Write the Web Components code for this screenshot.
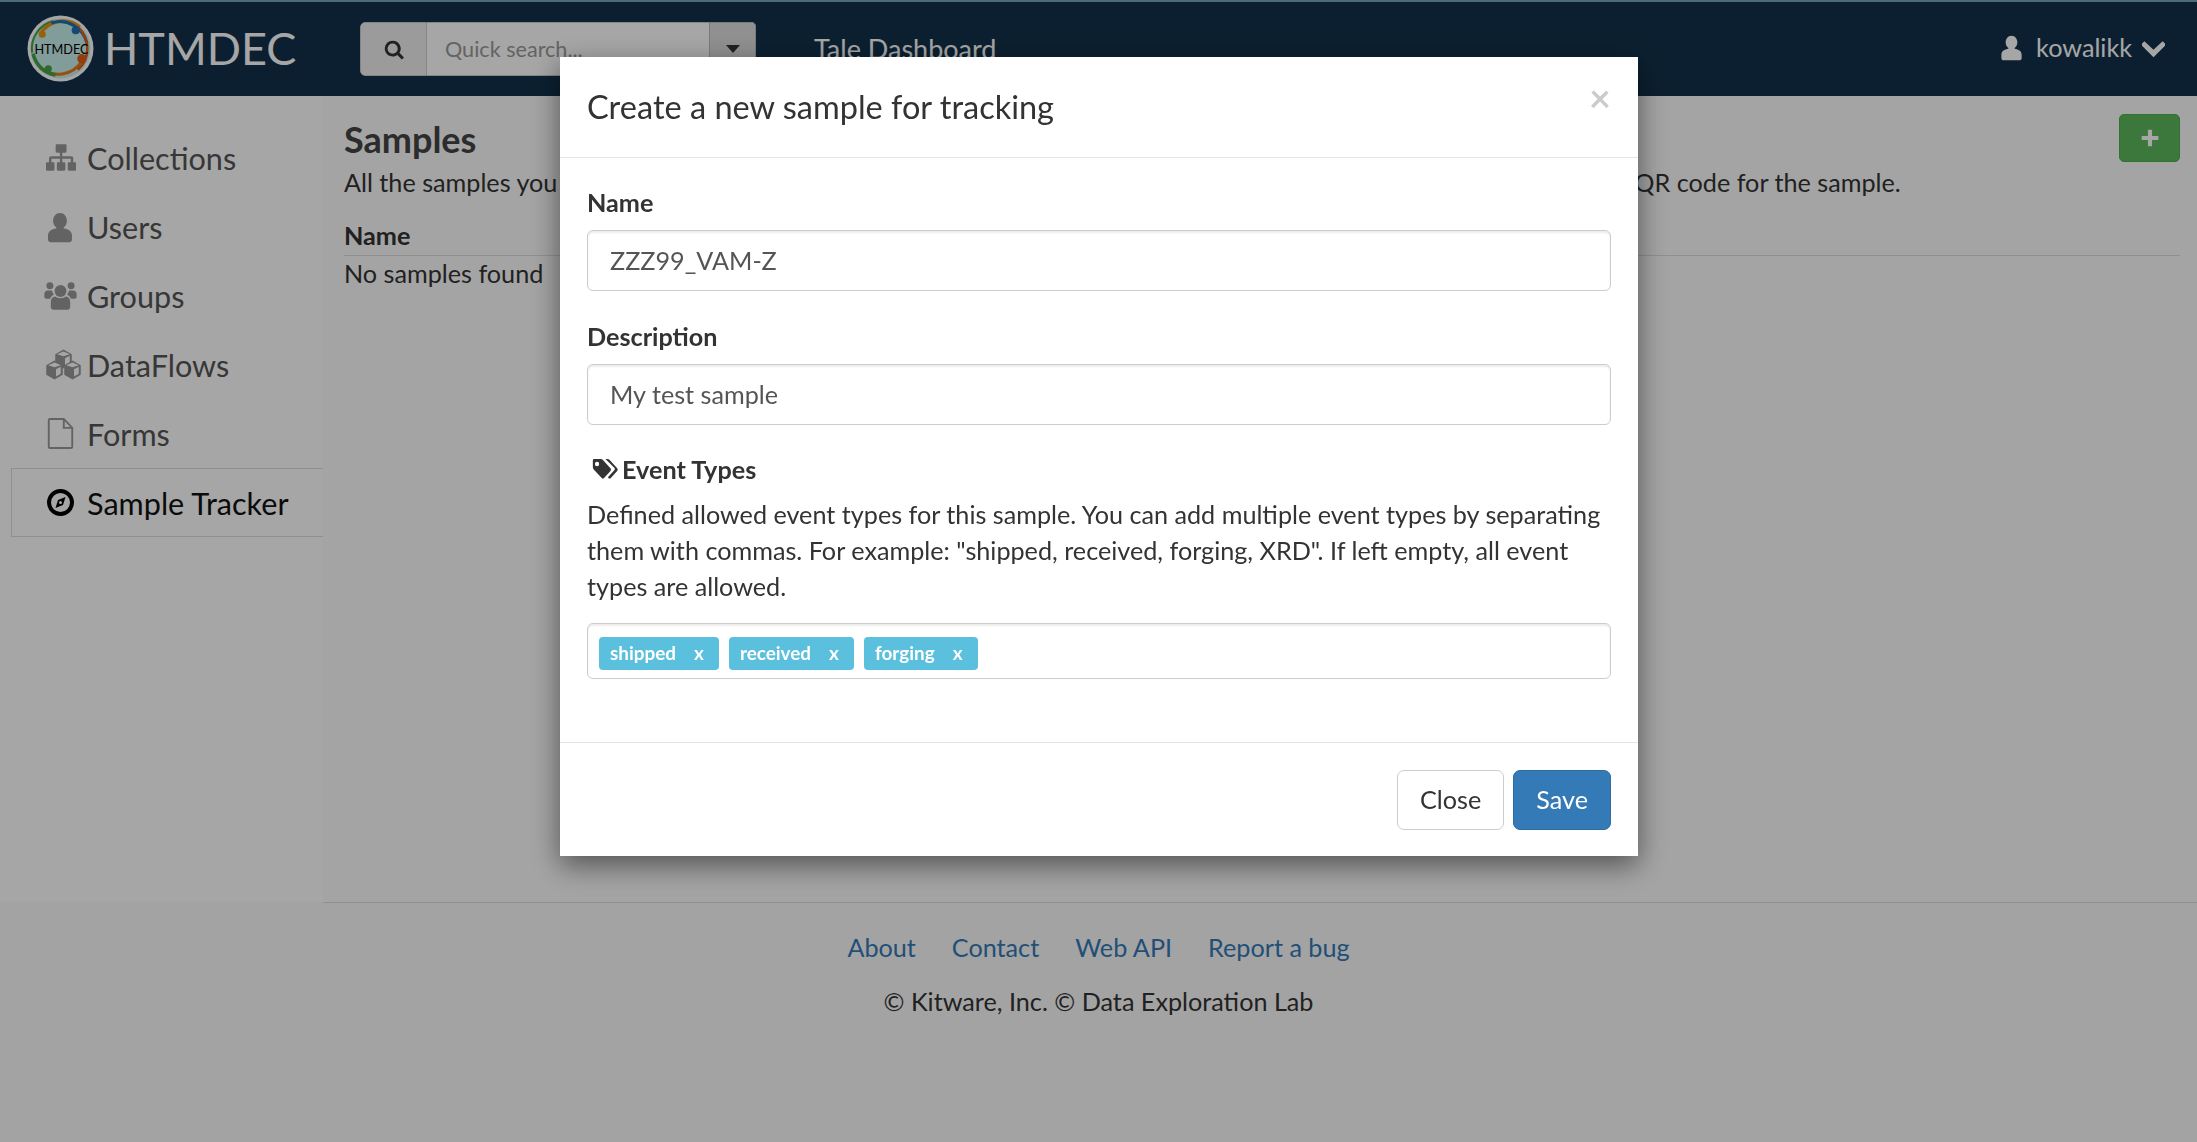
<!DOCTYPE html>
<html>
<head>
<meta charset="utf-8">
<title>HTMDEC</title>
<style>
    html, body { margin: 0; height: 100%; }
    body { font-family: Lato, "Open Sans", sans-serif; font-size: 25.2px; line-height: 36px; color: #333; background: #fff; overflow: hidden; }
</style>
</head>
<body>
<app-shell>
    <top-nav slot="nav"></top-nav>
    <side-menu slot="side"></side-menu>
    <samples-page slot="main"></samples-page>
    <page-footer slot="footer"></page-footer>
</app-shell>
<sample-dialog></sample-dialog>

<script>
const icons = {
    search: '<path d="M11 2a9 9 0 1 0 5.3 16.3l5.2 5.2 2.5-2.5-5.2-5.2A9 9 0 0 0 11 2zm0 3.2a5.8 5.8 0 1 1 0 11.6 5.8 5.8 0 0 1 0-11.6z"/>',
    user: '<path d="M12 1.5c3 0 5.2 2.6 5.2 5.8 0 2.2-1 4.100-2.500 5.100l.2.700c3.200.6 6.100 1.800 6.100 5.400v3c0 1.200-1 1.900-2 1.900H5c-1 0-2-.7-2-1.900v-3c0-3.600 2.900-4.800 6.100-5.400l.2-.7C7.800 11.400 6.800 9.500 6.800 7.300c0-3.200 2.200-5.800 5.200-5.800z"/>',
    group: '<circle cx="12.500" cy="8.500" r="4.600"/><circle cx="4.300" cy="4.500" r="2.700"/><circle cx="20.700" cy="4.500" r="2.700"/><path d="M2.600 8.200c-1.400 0-2.600 1-2.600 2.700v2.300c0 .8.800 1.300 1.500 1.300h3c.6-1.500 1.600-2.500 3-3.200-.8-.8-1.400-2-1.600-3.100zM22.400 8.200c1.400 0 2.600 1 2.600 2.700v2.300c0 .8-.8 1.300-1.500 1.300h-3c-.6-1.500-1.600-2.500-3-3.200.8-.8 1.400-2 1.600-3.100zM8.500 12.800c1 .8 2.500 1.300 4 1.300s3-.5 4-1.300c2.500.3 3.500 2 3.500 4.200V21c0 1.200-1.200 2-2.200 2H7.200C6.200 23 5 22.200 5 21v-4c0-2.200 1-3.900 3.500-4.200z"/>',
    sitemap: '<path d="M9 1h7c.6 0 1 .4 1 1v5c0 .6-.4 1-1 1h-2.500v3H21c1 0 1.500.6 1.500 1.500V16H24c.6 0 1 .4 1 1v5c0 .6-.4 1-1 1h-5c-.6 0-1-.4-1-1v-5c0-.6.400-1 1-1h1.500v-3h-7v3H15c.6 0 1 .4 1 1v5c0 .6-.4 1-1 1h-5c-.6 0-1-.4-1-1v-5c0-.6.400-1 1-1h1.500v-3h-7v3H6c.6 0 1 .4 1 1v5c0 .6-.4 1-1 1H1c-.6 0-1-.4-1-1v-5c0-.6.400-1 1-1h1.500v-2.500C2.500 11.600 3 11 4 11h7.500V8H9c-.6 0-1-.4-1-1V2c0-.6.400-1 1-1z"/>',
    chevron: '<path d="M2.500 6.500L0 9l12 12L24 9l-2.500-2.500L12 15.500z" stroke="currentColor" stroke-width="1.500"/>',
    plus: '<path d="M9.500 2h5v7.500H22v5h-7.500V22h-5v-7.500H2v-5h7.500z"/>',
    tags: '<path d="M1 2.500C1 1.600 1.600 1 2.500 1h8c.8 0 1.700.4 2.300 1l9.200 9.300c.8.800.8 2 0 2.800l-7.600 7.600c-.8.800-2 .8-2.800 0L2 12.500c-.6-.6-1-1.500-1-2.300zM6 4a2.500 2.500 0 1 0 0 5 2.500 2.500 0 0 0 0-5z"/><path d="M16 1h2.500c.8 0 1.700.4 2.300 1l9.200 9.300c.8.800.8 2 0 2.800l-7.600 7.600c-.8.800-2 .8-2.800 0l-.6-.6 7.600-7.700c.8-.8.800-2 0-2.800z"/>'
};

const svg = (name, w, h, box) => `<svg width="${w}" height="${h}" viewBox="${box || '0 0 24 24'}" fill="currentColor" aria-hidden="true">${icons[name]}</svg>`;

// one cube of the dataflows icon: dark hexagon with lighter top and right faces
const cube = (x, y, r) => {
    const dx = r * 0.87, dy = r * 0.5, i = 2;
    return `<path fill="#999" d="M${x} ${y - r}L${x + dx} ${y - dy}V${y + dy}L${x} ${y + r}L${x - dx} ${y + dy}V${y - dy}z"/>
        <path fill="#fff" d="M${x} ${y - r + i}L${x + dx - i} ${y - dy}L${x} ${y - dy + i}L${x - dx + i} ${y - dy}z"/>
        <path fill="#fff" d="M${x + 1.5} ${y - dy + i + 2}L${x + dx - 2} ${y - dy + 1.5}V${y + dy - 1}L${x + 1.5} ${y + r - 3}z"/>`;
};

class AppShell extends HTMLElement {
    constructor() {
        super();
        this.attachShadow({ mode: 'open' });
        this.shadowRoot.innerHTML = `
            <style>
                :host { display: grid; grid-template-columns: 323px 1fr; grid-template-rows: 96px 806px 1fr; height: 100vh; }
                .nav, .footer { grid-column: 1 / 3; }
            </style>
            <div class="nav"><slot name="nav"></slot></div>
            <div><slot name="side"></slot></div>
            <div><slot name="main"></slot></div>
            <div class="footer"><slot name="footer"></slot></div>
        `;
    }
}

class TopNav extends HTMLElement {
    constructor() {
        super();
        this.attachShadow({ mode: 'open' });
        this.shadowRoot.innerHTML = `
            <style>
                :host { display: block; height: 96px; box-sizing: border-box; background: #12314a; border-top: 2px solid #76a3b9; color: #fff; }
                .bar { display: flex; align-items: center; height: 94px; padding-left: 27px; position: relative; }
                .brand { display: flex; align-items: center; gap: 10px; font-size: 45px; width: 333px; margin-top: -1px; }
                .brand svg { display: block; flex: none; }
                .brand span { margin-top: -1px; }
                .search { display: flex; height: 54px; width: 396px; border-radius: 5px; overflow: hidden; }
                .s-icon { width: 67px; background: #eee; border: 1px solid #ccc; border-radius: 5px 0 0 5px; color: #333; display: flex; align-items: center; justify-content: center; box-sizing: border-box; }
                .s-input { flex: 1; background: #fff; border-top: 1px solid #ccc; border-bottom: 1px solid #ccc; color: #999; font-size: 21.6px; padding-left: 18px; line-height: 52px; white-space: nowrap; overflow: hidden; }
                .s-caret { width: 47px; background: #ddd; border: 1px solid #bbb; box-sizing: border-box; display: flex; align-items: center; justify-content: center; }
                .caret { width: 0; height: 0; border: 7px solid transparent; border-top: 8px solid #333; border-bottom: 0; }
                .title { margin-left: 58px; font-size: 27px; }
                .user { margin-left: auto; display: flex; align-items: center; padding-right: 32px; font-size: 25.2px; margin-top: -4px; }
                .user .name { margin: 0 10px 0 11px; }
                .user svg { display: block; }
            </style>
            <div class="bar">
                <div class="brand">
                    <svg width="67" height="67" viewBox="0 0 66 66">
                        <circle cx="33" cy="33" r="32.500" fill="#fff"/>
                        <circle cx="33" cy="33" r="29.500" fill="#c6f0ec"/>
                        <path d="M5 37A28 28 0 0 1 26 6" fill="none" stroke="#48a245" stroke-width="2"/>
                        <path d="M13 19A26 26 0 0 1 52 12" fill="none" stroke="#e8950e" stroke-width="3.500"/>
                        <path d="M24 8A27 27 0 0 1 59 28" fill="none" stroke="#1f6fb5" stroke-width="3"/>
                        <path d="M50 12A28 28 0 0 1 50 54" fill="none" stroke="#e25d14" stroke-width="2.500"/>
                        <path d="M13 52A28 28 0 0 0 54 46" fill="none" stroke="#e87a14" stroke-width="3"/>
                        <path d="M6 38A27 27 0 0 0 28 59" fill="none" stroke="#48a245" stroke-width="3.500"/>
                        <circle cx="15" cy="19" r="3.500" fill="#e8950e"/>
                        <circle cx="48" cy="15" r="4" fill="#1f6fb5"/>
                        <circle cx="54" cy="43" r="4.500" fill="#e25d14"/>
                        <circle cx="21" cy="53" r="3.500" fill="#48a245"/>
                        <text x="34" y="38" text-anchor="middle" font-family="Lato, sans-serif" font-size="12.500" fill="#000">HTMDEC</text>
                    </svg>
                    <span>HTMDEC</span>
                </div>
                <div class="search">
                    <div class="s-icon">${svg('search', 21, 21)}</div>
                    <div class="s-input">Quick search...</div>
                    <div class="s-caret"><div class="caret"></div></div>
                </div>
                <div class="title">Tale Dashboard</div>
                <div class="user">
                    ${svg('user', 27, 27)}
                    <span class="name">kowalikk</span>
                    ${svg('chevron', 23, 23)}
                </div>
            </div>
        `;
    }
}

class NavItem extends HTMLElement {
    constructor() {
        super();
        this.attachShadow({ mode: 'open' });
        this.shadowRoot.innerHTML = `
            <style>
                :host { display: block; height: 69px; box-sizing: border-box; }
                .row { display: flex; align-items: center; height: 100%; box-sizing: border-box; padding: 2px 0 0 26px; font-size: 30.6px; color: #555; }
                .ico { width: 46px; flex: none; display: flex; justify-content: center; color: #999; margin: -2px 4px 0 0; }
                ::slotted(*) { display: block; }
                :host([active]) .row { color: #111; border: 1px solid #ddd; border-right: 0; background: #fff; padding-left: 25px; }
                :host([active]) .ico { color: #000; }
            </style>
            <div class="row"><span class="ico"><slot name="icon"></slot></span><slot></slot></div>
        `;
    }
}

class SideMenu extends HTMLElement {
    constructor() {
        super();
        this.attachShadow({ mode: 'open' });
        this.shadowRoot.innerHTML = `
            <style>
                :host { display: block; background: #fff; height: 100%; padding: 27px 0 0 11px; box-sizing: border-box; }
                svg { display: block; }
                .flows { margin-left: 6px; }
            </style>
            <nav-item><span slot="icon">${svg('sitemap', 31, 29)}</span>Collections</nav-item>
            <nav-item><span slot="icon">${svg('user', 32, 32)}</span>Users</nav-item>
            <nav-item><span slot="icon">${svg('group', 33, 31, '0 0 25 24')}</span>Groups</nav-item>
            <nav-item><span slot="icon" class="flows"><svg width="37" height="31" viewBox="0 0 37 31">${cube(18.5, 10, 9.5)}${cube(9.5, 21, 9.5)}${cube(27.5, 21, 9.5)}</svg></span>DataFlows</nav-item>
            <nav-item><span slot="icon"><svg width="27" height="31" viewBox="0 0 27 33" fill="none" stroke="#999" stroke-width="2"><path d="M1 2.500c0-.8.600-1.500 1.500-1.500H17l9 9.500V30.500c0 .8-.6 1.500-1.500 1.500h-22c-.9 0-1.500-.7-1.500-1.500zM17 1v9.500h9"/></svg></span>Forms</nav-item>
            <nav-item active><span slot="icon"><svg width="27" height="27" viewBox="0 0 27 27" fill="none"><circle cx="13.500" cy="13.500" r="11.500" stroke="#000" stroke-width="4"/><path d="M18.500 8l-2.500 8-7.500 3 2.500-8z" fill="#000"/><circle cx="13.500" cy="13.500" r="1.500" fill="#fff"/></svg></span>Sample Tracker</nav-item>
        `;
    }
}

class SamplesPage extends HTMLElement {
    constructor() {
        super();
        this.attachShadow({ mode: 'open' });
        this.shadowRoot.innerHTML = `
            <style>
                :host { display: block; height: 100%; background: #fcfcfc; padding: 18px 17px 0 21px; box-sizing: border-box; }
                .head { display: flex; justify-content: space-between; align-items: flex-start; height: 48px; }
                h1 { margin: -1px 0 0; font-size: 36px; font-weight: 700; line-height: 52px; color: #444; }
                .add { width: 61px; height: 48px; box-sizing: border-box; background: #5cb85c; border: 1px solid #4cae4c; border-radius: 5px; color: #fff; display: flex; align-items: center; justify-content: center; }
                p { margin: 2px 0 0; white-space: nowrap; height: 36px; }
                .th { font-weight: 700; margin-top: 17px; height: 36px; border-bottom: 1px solid #ddd; padding-bottom: 2px; }
                .td { height: 36px; margin-top: -1px; }
            </style>
            <div class="head">
                <h1>Samples</h1>
                <div class="add">${svg('plus', 20, 20)}</div>
            </div>
            <p>All the samples you have access to are listed below. Click on a sample to view its events, add new events, and get the QR code for the sample.</p>
            <div class="th">Name</div>
            <div class="td">No samples found</div>
        `;
    }
}

class PageFooter extends HTMLElement {
    constructor() {
        super();
        this.attachShadow({ mode: 'open' });
        this.shadowRoot.innerHTML = `
            <style>
                :host { display: block; height: 100%; box-sizing: border-box; padding-top: 27px; text-align: center; background: linear-gradient(#ddd, #ddd) 323px 0 / 100% 1px no-repeat, #fbfbfb; }
                .links { display: flex; justify-content: center; gap: 36px; color: #337ab7; }
                .copy { margin-top: 18px; }
            </style>
            <div class="links"><span>About</span><span>Contact</span><span>Web API</span><span>Report a bug</span></div>
            <div class="copy">© Kitware, Inc. © Data Exploration Lab</div>
        `;
    }
}

class TagChip extends HTMLElement {
    constructor() {
        super();
        this.attachShadow({ mode: 'open' });
        this.shadowRoot.innerHTML = `
            <style>
                :host { display: inline-flex; align-items: center; height: 33px; box-sizing: border-box; padding: 0 15px 0 11px; background: #5bc0de; color: #fff; border-radius: 4px; font-size: 18.9px; font-weight: 700; line-height: 1; }
                .x { margin-left: 18px; }
            </style>
            <slot></slot><span class="x">x</span>
        `;
    }
}

class FormField extends HTMLElement {
    constructor() {
        super();
        this.attachShadow({ mode: 'open' });
        this.shadowRoot.innerHTML = `
            <style>
                :host { display: block; margin-bottom: 27.5px; }
                label { display: block; font-weight: 700; margin: -1px 0 10px; }
                .box { height: 61px; box-sizing: border-box; border: 1px solid #ccc; border-radius: 6px; padding: 0 22px; line-height: 59px; color: #555; box-shadow: inset 0 2px 2px rgba(0,0,0,.075); }
            </style>
            <label>${this.getAttribute('label')}</label>
            <div class="box"><slot></slot></div>
        `;
    }
}

class SampleDialog extends HTMLElement {
    constructor() {
        super();
        this.attachShadow({ mode: 'open' });
        this.shadowRoot.innerHTML = `
            <style>
                :host { display: block; position: fixed; inset: 0; background: rgba(0,0,0,.35); }
                .modal { position: absolute; left: 560px; top: 57px; width: 1078px; height: 799px; box-sizing: border-box; background: #fff; box-shadow: 0 9px 27px rgba(0,0,0,.5); display: flex; flex-direction: column; }
                header { height: 101px; box-sizing: border-box; padding: 0 27px; border-bottom: 1px solid #e5e5e5; display: flex; justify-content: space-between; }
                h4 { margin: 27px 0 0; font-size: 32.5px; font-weight: 400; line-height: 46px; }
                .close { font-size: 37.8px; font-weight: 700; color: #000; opacity: .2; line-height: 38px; margin-top: 22px; }
                .body { flex: 1; padding: 27px 27px 0; }
                .ev { display: flex; align-items: center; gap: 4px; font-weight: 700; margin: -1px 0 9px; height: 36px; }
                .ev svg { display: block; margin-left: 5px; }
                p { margin: 0 0 19px; }
                .tags { height: 56px; box-sizing: border-box; border: 1px solid #ccc; border-radius: 6px; display: flex; align-items: flex-start; gap: 10px; padding: 13px 0 0 11px; box-shadow: inset 0 2px 2px rgba(0,0,0,.075); }
                footer { height: 114px; box-sizing: border-box; border-top: 1px solid #e5e5e5; padding: 27px 27px 0 0; display: flex; justify-content: flex-end; gap: 9px; }
                .btn { height: 60px; box-sizing: border-box; border: 1px solid #ccc; border-radius: 7px; padding: 0 22px; line-height: 56px; }
                .save { background: #337ab7; border-color: #2e6da4; color: #fff; }
            </style>
            <div class="modal">
                <header><h4>Create a new sample for tracking</h4><span class="close">×</span></header>
                <div class="body">
                    <form-field label="Name">ZZZ99_VAM-Z</form-field>
                    <form-field label="Description">My test sample</form-field>
                    <div class="ev"><svg width="26" height="22" viewBox="0 0 31 24" preserveAspectRatio="none" fill="currentColor">${icons.tags}</svg>Event Types</div>
                    <p>Defined allowed event types for this sample. You can add multiple event types by separating them with commas. For example: "shipped, received, forging, XRD". If left empty, all event types are allowed.</p>
                    <div class="tags"><tag-chip>shipped</tag-chip><tag-chip>received</tag-chip><tag-chip>forging</tag-chip></div>
                </div>
                <footer><div class="btn">Close</div><div class="btn save">Save</div></footer>
            </div>
        `;
    }
}

customElements.define('app-shell', AppShell);
customElements.define('top-nav', TopNav);
customElements.define('nav-item', NavItem);
customElements.define('side-menu', SideMenu);
customElements.define('samples-page', SamplesPage);
customElements.define('page-footer', PageFooter);
customElements.define('tag-chip', TagChip);
customElements.define('form-field', FormField);
customElements.define('sample-dialog', SampleDialog);
</script>
</body>
</html>
